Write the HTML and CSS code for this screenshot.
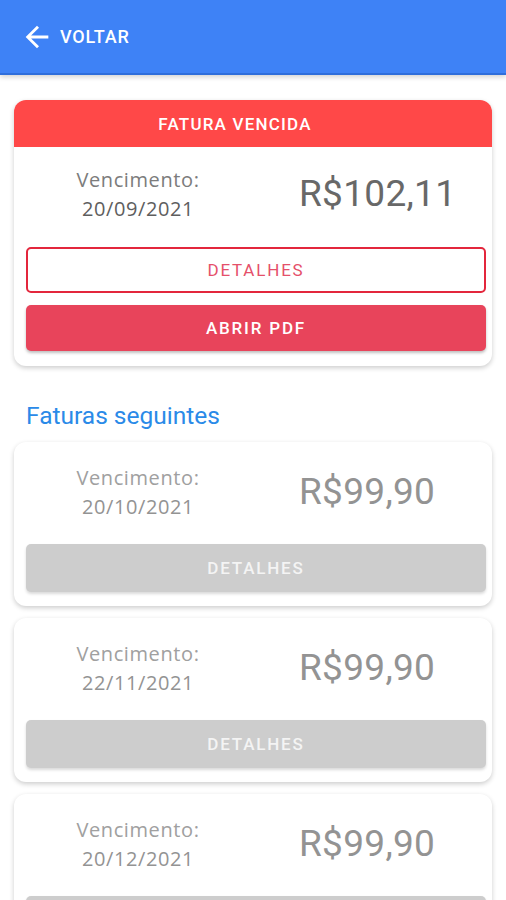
FILE: index.html
```html
<html>
<head>
	<meta charset="utf-8">
	<link rel="stylesheet" href="styles.css">
</head>
<body>

<div class="topbar">
	<a class="back" href="#">
		<svg class="back-icon" viewBox="0 0 24 24"><path d="M20 11H7.83l5.59-5.59L12 4l-8 8 8 8 1.41-1.41L7.83 13H20v-2z"/></svg>
		<span>VOLTAR</span>
	</a>
</div>

<div class="content">

	<div class="card card-late">
		<div class="card-head">FATURA VENCIDA</div>
		<div class="card-body">
			<div class="info">
				<div class="due">
					<div class="due-label">Vencimento:</div>
					<div class="due-date">20/09/2021</div>
				</div>
				<div class="amount">R$102,11</div>
			</div>
			<a class="btn btn-outline" href="#">DETALHES</a>
			<a class="btn btn-red" href="#">ABRIR PDF</a>
		</div>
	</div>

	<h2 class="section-title">Faturas seguintes</h2>

	<div class="card card-next">
		<div class="card-body">
			<div class="info">
				<div class="due">
					<div class="due-label">Vencimento:</div>
					<div class="due-date">20/10/2021</div>
				</div>
				<div class="amount">R$99,90</div>
			</div>
			<a class="btn btn-grey" href="#">DETALHES</a>
		</div>
	</div>

	<div class="card card-next">
		<div class="card-body">
			<div class="info">
				<div class="due">
					<div class="due-label">Vencimento:</div>
					<div class="due-date">22/11/2021</div>
				</div>
				<div class="amount">R$99,90</div>
			</div>
			<a class="btn btn-grey" href="#">DETALHES</a>
		</div>
	</div>

	<div class="card card-next">
		<div class="card-body">
			<div class="info">
				<div class="due">
					<div class="due-label">Vencimento:</div>
					<div class="due-date">20/12/2021</div>
				</div>
				<div class="amount">R$99,90</div>
			</div>
			<a class="btn btn-grey" href="#">DETALHES</a>
		</div>
	</div>

</div>

</body>
</html>
```

FILE: styles.css
```css
body {
	margin: 0px;
	background: #fff;
	font-family: Roboto, "Liberation Sans", sans-serif;
	overflow: hidden;
}

/* top bar */
.topbar {
	height: 73px;
	background: #3e82f6;
	border-bottom: 2px solid #2f6edb;
	box-shadow: 0 2px 5px rgba(0, 0, 0, 0.18);
	display: flex;
	align-items: center;
	padding-left: 20px;
	position: relative;
}

.back {
	display: flex;
	align-items: center;
	gap: 6px;
	color: #fff;
	text-decoration: none;
	font-size: 18px;
	font-weight: 500;
	letter-spacing: 0.8px;
}

.back-icon {
	width: 34px;
	height: 34px;
	fill: #fff;
}

/* list */
.content {
	padding: 25px 14px 0 14px;
}

.card {
	background: #fff;
	border-radius: 12px;
	box-shadow: 0 2px 5px rgba(0, 0, 0, 0.2);
	overflow: hidden;
	margin-bottom: 12px;
}

.card-head {
	height: 47px;
	background: #ff4848;
	color: #fff;
	display: flex;
	align-items: center;
	justify-content: center;
	padding-right: 36px;
	font-size: 17px;
	font-weight: 500;
	letter-spacing: 1.2px;
}

.card-body {
	padding: 10px 6px 14px 12px;
}

.card-late .card-body {
	padding-top: 7px;
	padding-bottom: 15px;
}

.info {
	height: 80px;
	display: grid;
	grid-template-columns: 1fr 1fr;
	align-items: center;
	margin-bottom: 12px;
}

.card-late .info {
	margin-bottom: 13px;
}

.due {
	text-align: center;
	padding-right: 6px;
	font-family: "Open Sans", "DejaVu Sans", sans-serif;
	font-size: 20px;
	line-height: 29px;
	letter-spacing: 0.6px;
}

.due-label {
	color: #7c7c7c;
}

.due-date {
	color: #5e5e5e;
}

.amount {
	padding-left: 43px;
	font-size: 37px;
	line-height: 44px;
	letter-spacing: 0.3px;
	color: #686868;
}

.card-next .due-label {
	color: #a0a0a0;
}

.card-next .due-date,
.card-next .amount {
	color: #939393;
}

/* buttons */
.btn {
	display: flex;
	align-items: center;
	justify-content: center;
	box-sizing: border-box;
	height: 46px;
	border-radius: 5px;
	text-decoration: none;
	font-size: 17px;
	font-weight: 500;
	letter-spacing: 1.8px;
}

.btn-outline {
	border: 2px solid #e3263c;
	color: #e5506a;
	font-weight: 400;
	margin-bottom: 12px;
}

.btn-red {
	background: #e8445b;
	color: #fff;
	box-shadow: 0 2px 3px rgba(0, 0, 0, 0.25);
}

.btn-grey {
	height: 48px;
	background: #cdcdcd;
	color: #f4f4f4;
	box-shadow: 0 2px 3px rgba(0, 0, 0, 0.15);
}

.section-title {
	margin: 36px 0 12px 12px;
	font-size: 24.5px;
	line-height: 28px;
	font-weight: 400;
	color: #2a8ae8;
}
```
